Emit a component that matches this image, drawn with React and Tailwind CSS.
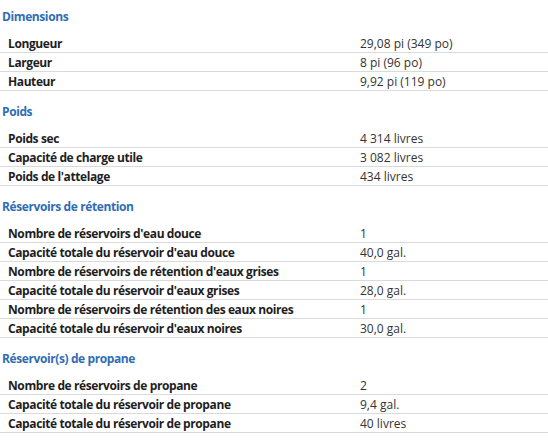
import React from "react";

const sections = [
  {
    title: "Dimensions",
    rows: [
      ["Longueur", "29,08 pi (349 po)"],
      ["Largeur", "8 pi (96 po)"],
      ["Hauteur", "9,92 pi (119 po)"],
    ],
  },
  {
    title: "Poids",
    rows: [
      ["Poids sec", "4 314 livres"],
      ["Capacité de charge utile", "3 082 livres"],
      ["Poids de l'attelage", "434 livres"],
    ],
  },
  {
    title: "Réservoirs de rétention",
    rows: [
      ["Nombre de réservoirs d'eau douce", "1"],
      ["Capacité totale du réservoir d'eau douce", "40,0 gal."],
      ["Nombre de réservoirs de rétention d'eaux grises", "1"],
      ["Capacité totale du réservoir d'eaux grises", "28,0 gal."],
      ["Nombre de réservoirs de rétention des eaux noires", "1"],
      ["Capacité totale du réservoir d'eaux noires", "30,0 gal."],
    ],
  },
  {
    title: "Réservoir(s) de propane",
    rows: [
      ["Nombre de réservoirs de propane", "2"],
      ["Capacité totale du réservoir de propane", "9,4 gal."],
      ["Capacité totale du réservoir de propane", "40 livres"],
    ],
  },
];

export default function App() {
  return (
    <div
      className="w-[548px] h-[441px] bg-white overflow-hidden text-[12px]"
      style={{ fontFamily: '"Open Sans", "Noto Sans", Arial, sans-serif' }}
    >
      {sections.map((s) => (
        <div key={s.title} className="mb-[4px]">
          <div className="h-[34px] pt-[8px] pl-[2px] leading-[18px] font-bold tracking-[-0.4px] text-[#2f6db5]">
            {s.title}
          </div>
          {s.rows.map(([k, v], i) => (
            <div
              key={i}
              className="flex h-[19px] pt-[1px] border-b border-[#dadada] leading-[18px]"
            >
              <div className="w-[352px] pl-[8px] font-bold tracking-[-0.4px] text-[#1e1e1e] whitespace-nowrap overflow-hidden">
                {k}
              </div>
              <div className="pl-[8px] text-[#333333] whitespace-nowrap">{v}</div>
            </div>
          ))}
        </div>
      ))}
    </div>
  );
}
